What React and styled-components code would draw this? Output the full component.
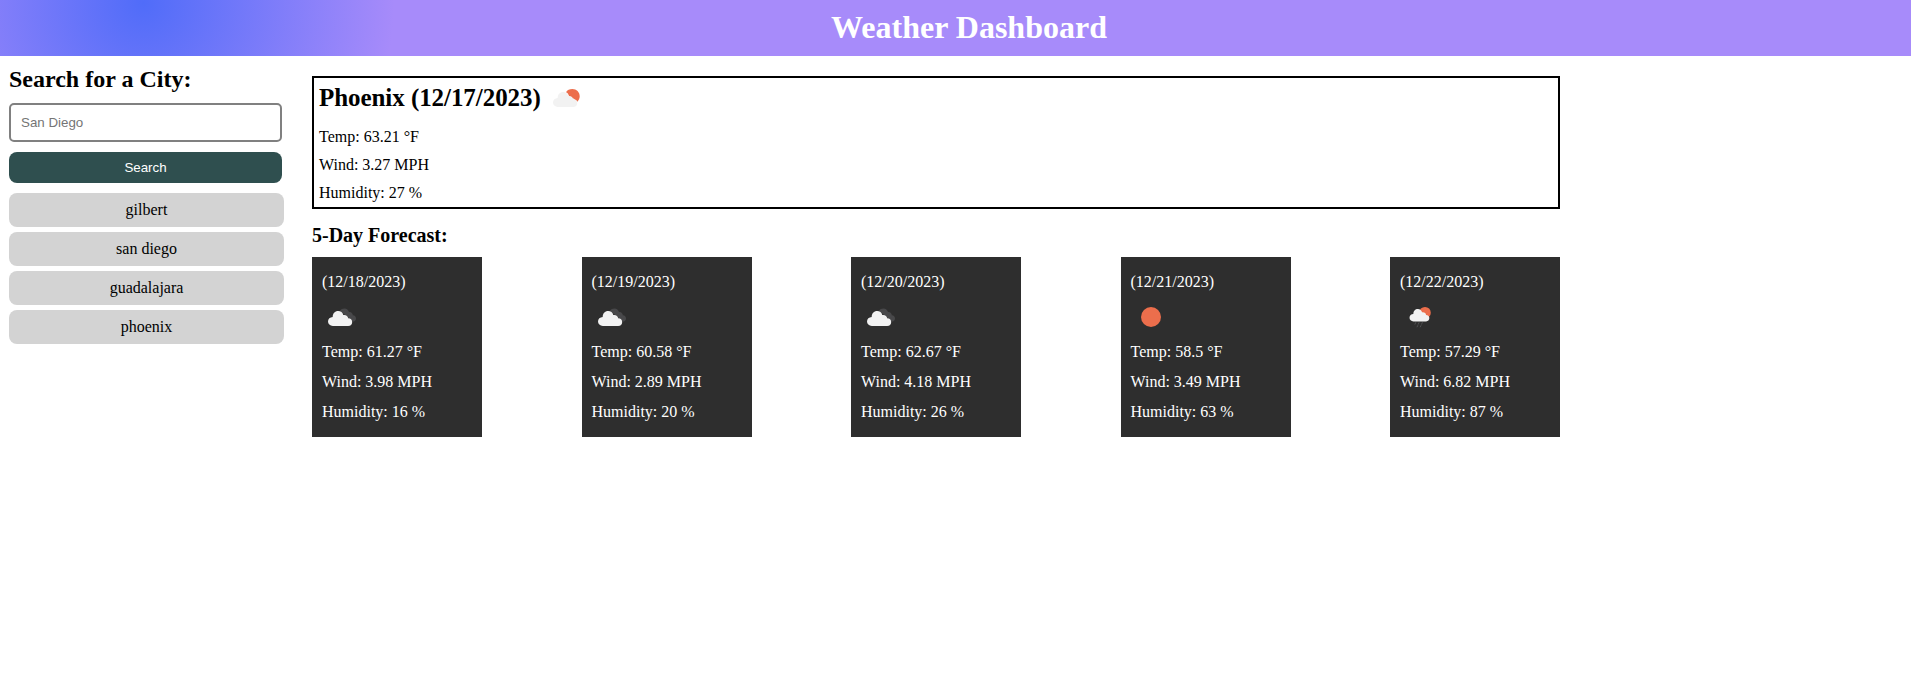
import React from 'react';
import styled, { createGlobalStyle } from 'styled-components';

const GlobalStyle = createGlobalStyle`
  * { box-sizing: border-box; margin: 0; padding: 0; }
  body { background: #fff; color: #000; font: 16px "Liberation Serif", "Times New Roman", serif; }
`;

const Header = styled.header`
  height: 56px;
  padding: 9px 0 10px 27px;
  text-align: center;
  color: #fff;
  background: radial-gradient(circle at 7.5% 5%, rgb(80, 108, 249) 0%, rgb(167, 139, 250) 14.2%);
`;

const Title = styled.h1`
  font-size: 32px;
  line-height: 36px;
`;

const Main = styled.main`
  display: flex;
  align-items: flex-start;
`;

const Sidebar = styled.aside`
  width: 284px;
  padding: 9px 0 0 9px;
`;

const SearchForm = styled.form`
  display: flex;
  flex-direction: column;
  width: 273px;
`;

const SearchLabel = styled.h2`
  font-size: 24px;
  line-height: 28px;
  margin-bottom: 10px;
`;

const SearchInput = styled.input`
  height: 39px;
  padding: 10px;
  border: 2px solid gray;
  border-radius: 5px;
  font: 13.333px "Liberation Sans", Arial, sans-serif;
  &::placeholder { color: #757575; }
`;

const SearchButton = styled.button`
  height: 31px;
  margin: 10px 0;
  border: none;
  border-radius: 8px;
  color: #fff;
  background: darkslategray;
  font: 13.333px "Liberation Sans", Arial, sans-serif;
`;

const CityList = styled.ul`
  display: flex;
  flex-direction: column;
  gap: 5px;
  list-style: none;
`;

const City = styled.li`
  height: 34px;
  line-height: 34px;
  text-align: center;
  border-radius: 8px;
  background: lightgray;
`;

const Content = styled.section`
  width: 1248px;
  margin: 20px 0 0 28px;
`;

const Current = styled.article`
  height: 133px;
  padding: 0 5px;
  border: 2px solid #000;
  line-height: 28px;
`;

const CurrentHead = styled.div`
  display: flex;
  gap: 6px;
  height: 45px;
`;

const CurrentTitle = styled.h2`
  font-size: 25px;
  line-height: 40px;
  letter-spacing: -0.06px;
`;

const ForecastTitle = styled.h3`
  margin: 15px 0 10px;
  font-size: 20px;
  line-height: 23px;
`;

const Cards = styled.div`
  display: flex;
  justify-content: space-between;
`;

const Card = styled.article`
  width: 170px;
  height: 180px;
  padding: 10px;
  color: #fff;
  background: #2e2e2e;
  line-height: 30px;
`;

const Icon = styled.svg`
  display: block;
  width: 40px;
  height: 40px;
`;

const CLOUD =
  'M10.8 29C8 29 6 27 6 24.6C6 22 8 20.2 10.7 20.1C10.5 16.5 13 14 16.2 14C18.8 14 20.7 15.6 21.3 18C23.8 17.5 26 19 26.2 21.2C28.6 21.2 30.2 22.8 30.2 25C30.2 27.4 28.5 29 26.2 29Z';

function WeatherIcon({ kind }) {
  return (
    <Icon viewBox="0 0 40 40" aria-hidden="true">
      {kind === 'sun' && <circle cx="20" cy="20" r="10" fill="#ec6e4c" />}
      {kind === 'partly' && (
        <>
          <path
            d="M19 14.2C20.2 12.3 22.6 11.1 25.4 11.1C29.5 11.1 32.7 14.3 32.7 18.2C32.7 20.3 31.8 22.3 30.3 23.7C29.7 22.6 28.8 22 27.5 21.6C27.2 20.7 26.5 20.2 26 20.6L24.6 21.6L21.8 17.6C21.4 16 20.5 14.8 19 14.2Z"
            fill="#ec6e4c"
          />
          <path d={CLOUD} fill="#f2f2f2" />
        </>
      )}
      {kind === 'clouds' && (
        <>
          <path
            d="M18 13.8C19 12.2 20.5 11.4 22.4 11.4C24.8 11.4 26.4 12.9 27 15C29.2 14.8 30.8 16.2 30.8 18.2C32.8 18.4 34 19.8 34 21.4C34 23.2 32.6 24.5 30.7 24.6Z"
            fill="#48484a"
          />
          <path d={CLOUD} fill="#f2f2f2" />
        </>
      )}
      {kind === 'rain' && (
        <>
          <circle cx="25" cy="15.7" r="5.8" fill="#ec6e4c" />
          <path d={CLOUD} fill="#f2f2f2" transform="translate(4.6 .6) scale(.82)" />
          <path
            d="M15.7 25.6l-.7 1.6M19 25.6l-.7 1.6M22.3 25.6l-.7 1.6M17.7 28.6l-.6 1.3M20.9 28.6l-.6 1.3"
            stroke="#505052"
            strokeWidth="1"
            strokeLinecap="round"
          />
        </>
      )}
    </Icon>
  );
}

const cities = ['gilbert', 'san diego', 'guadalajara', 'phoenix'];

const days = [
  { date: '12/18/2023', icon: 'clouds', temp: '61.27', wind: '3.98', humidity: 16 },
  { date: '12/19/2023', icon: 'clouds', temp: '60.58', wind: '2.89', humidity: 20 },
  { date: '12/20/2023', icon: 'clouds', temp: '62.67', wind: '4.18', humidity: 26 },
  { date: '12/21/2023', icon: 'sun', temp: '58.5', wind: '3.49', humidity: 63 },
  { date: '12/22/2023', icon: 'rain', temp: '57.29', wind: '6.82', humidity: 87 },
];

function Readings({ temp, wind, humidity }) {
  return (
    <>
      <p>{`Temp: ${temp} °F`}</p>
      <p>{`Wind: ${wind} MPH`}</p>
      <p>{`Humidity: ${humidity} %`}</p>
    </>
  );
}

export default function App() {
  return (
    <>
      <GlobalStyle />
      <Header>
        <Title>Weather Dashboard</Title>
      </Header>
      <Main>
        <Sidebar>
          <SearchForm>
            <SearchLabel>Search for a City:</SearchLabel>
            <SearchInput placeholder="San Diego" />
            <SearchButton type="button">Search</SearchButton>
          </SearchForm>
          <CityList>
            {cities.map((city) => (
              <City key={city}>{city}</City>
            ))}
          </CityList>
        </Sidebar>
        <Content>
          <Current>
            <CurrentHead>
              <CurrentTitle>Phoenix (12/17/2023)</CurrentTitle>
              <WeatherIcon kind="partly" />
            </CurrentHead>
            <Readings temp="63.21" wind="3.27" humidity={27} />
          </Current>
          <ForecastTitle>5-Day Forecast:</ForecastTitle>
          <Cards>
            {days.map((day) => (
              <Card key={day.date}>
                <p>{`(${day.date})`}</p>
                <WeatherIcon kind={day.icon} />
                <Readings temp={day.temp} wind={day.wind} humidity={day.humidity} />
              </Card>
            ))}
          </Cards>
        </Content>
      </Main>
    </>
  );
}
